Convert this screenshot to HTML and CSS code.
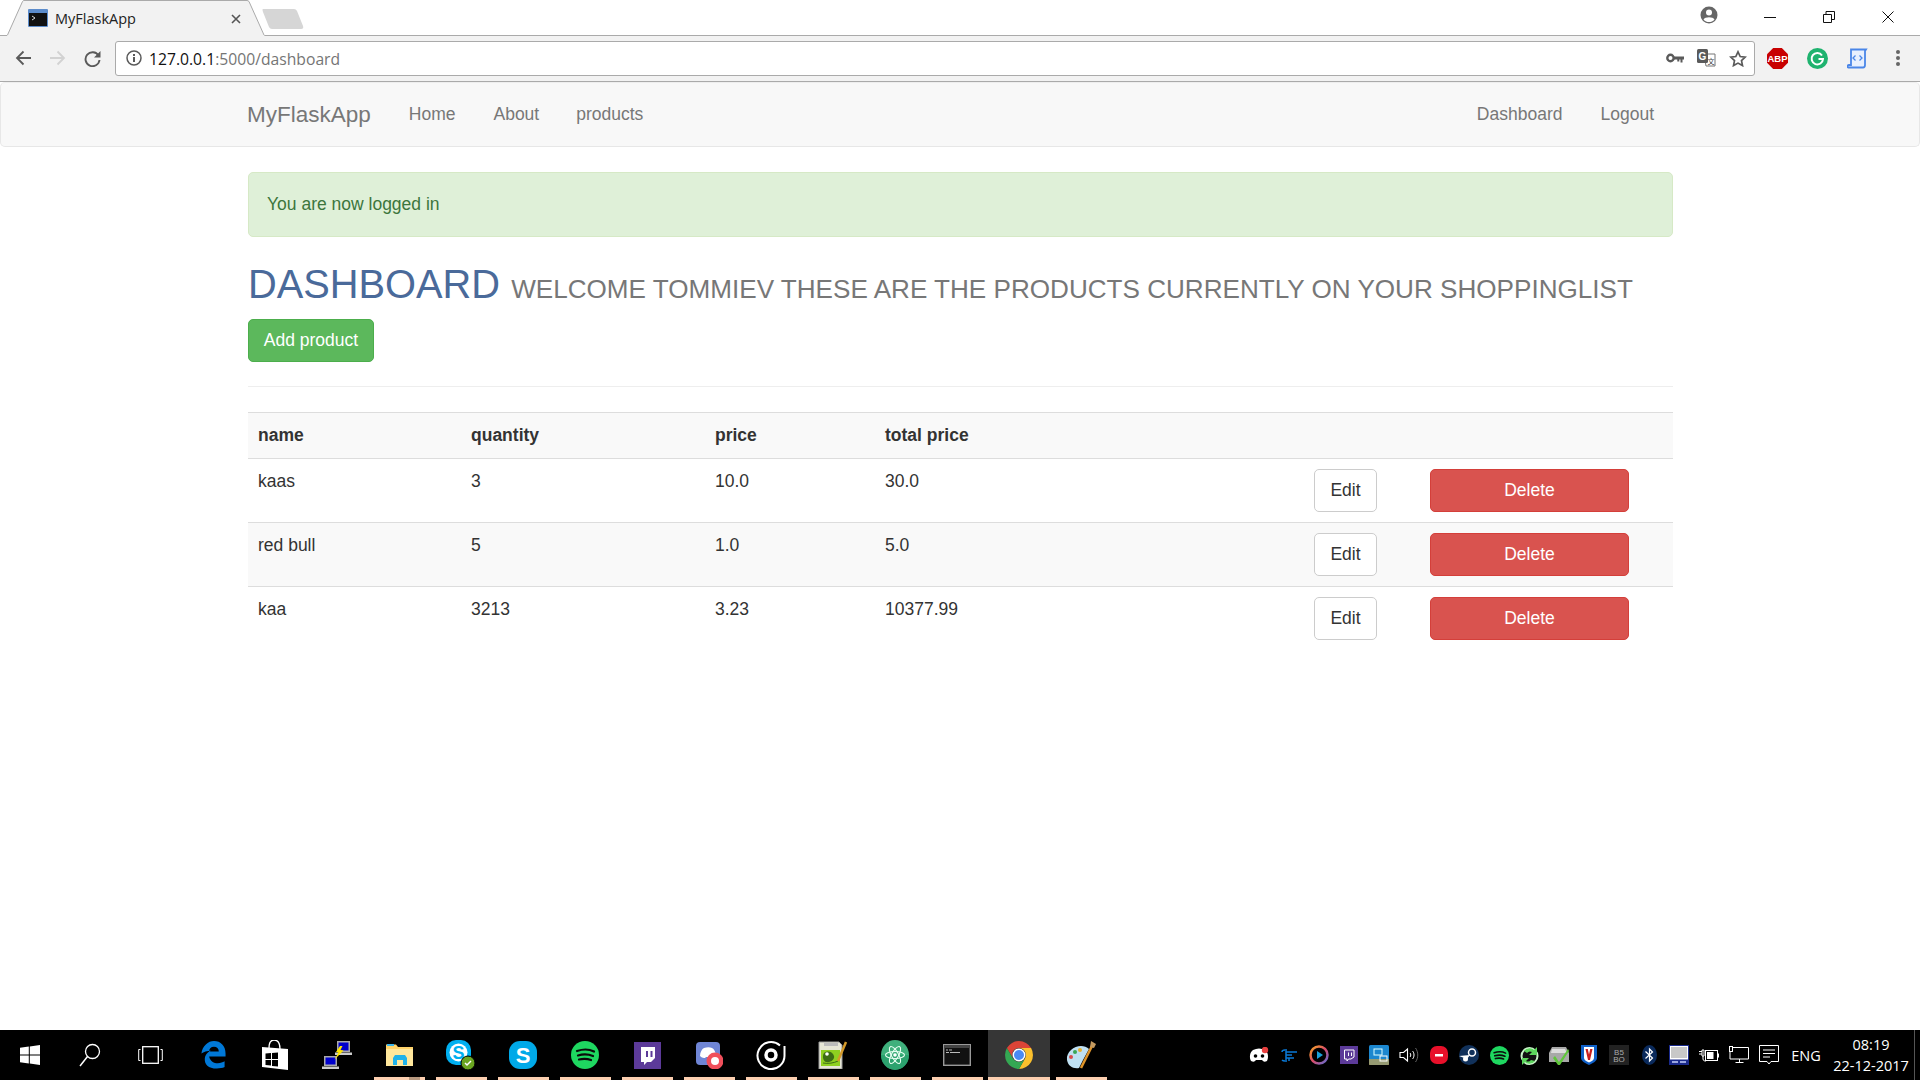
FILE: index.html
```html
<!DOCTYPE html>
<html lang="en">
<head>
<meta charset="utf-8">
<title>MyFlaskApp</title>
<link rel="stylesheet" href="styles.css">
</head>
<body>
<header class="chrome">
  <div class="tabstrip">
    <div class="tab">
      <svg class="tab-shape" width="272" height="36" viewBox="0 0 272 36"><path d="M7 36 L22.5 1 Q23 .5 24 .5 H247 Q248 .5 249 1.5 L264.500 36Z" fill="#f2f2f2"/><path d="M7.500 35 L22.500 1.500 Q23 .5 24 .5 H247 Q248 .5 249 1.500 L264 35" fill="none" stroke="#aaa"/></svg>
      <svg class="tab-fav" width="20" height="18" viewBox="0 0 20 18"><rect width="20" height="18" rx="1" fill="#5c8ccb"/><rect x="1" y="4" width="18" height="13" fill="#111"/><path d="M4 7l3 2-3 2" stroke="#ddd" fill="none"/></svg>
      <span class="tab-title">MyFlaskApp</span>
      <svg class="tab-x" width="10" height="10" viewBox="0 0 10 10"><path d="M1 1l8 8M9 1l-8 8" stroke="#555" stroke-width="1.600"/></svg>
    </div>
    <svg class="newtab" width="42" height="22" viewBox="0 0 42 22"><path d="M1 1H32Q34 1 35 3L41 18Q42 21 39 21H10Q8 21 7 19L1 4Q0 1 1 1Z" fill="#d6d6d6"/></svg>
    <div class="winctl">
      <svg class="profile" width="18" height="18" viewBox="0 0 18 18"><circle cx="9" cy="9" r="8.500" fill="#666"/><circle cx="9" cy="6.500" r="3" fill="#fff"/><path d="M3.500 13.500C5 10.500 13 10.500 14.500 13.500 13 15.500 11 16 9 16 7 16 5 15.500 3.500 13.500Z" fill="#fff"/></svg>
      <span class="winbtn"><svg width="12" height="12" viewBox="0 0 12 12"><path d="M0 6.500H12" stroke="#111"/></svg></span>
      <span class="winbtn"><svg width="12" height="12" viewBox="0 0 12 12"><path d="M.5 3.500h8v8h-8zM3 3.500V.5h8.500v8H8.500" fill="none" stroke="#111"/></svg></span>
      <span class="winbtn"><svg width="12" height="12" viewBox="0 0 12 12"><path d="M.5.5l11 11M11.500.5l-11 11" stroke="#111"/></svg></span>
    </div>
  </div>
  <div class="toolbar">
    <svg class="nav-ic" width="16" height="16" viewBox="0 0 16 16"><path d="M16 8H2M8.500 1.500L2 8l6.500 6.500" fill="none" stroke="#5a5a5a" stroke-width="1.800"/></svg>
    <svg class="nav-ic" width="16" height="16" viewBox="0 0 16 16"><path d="M0 8H14M7.500 1.500L14 8l-6.500 6.500" fill="none" stroke="#d2d2d2" stroke-width="1.800"/></svg>
    <svg class="nav-ic" width="17" height="17" viewBox="0 0 17 17"><path d="M14.500 5.500A7 7 0 1 0 15.500 10" fill="none" stroke="#5a5a5a" stroke-width="1.900"/><path d="M16.500 1v6.500H10z" fill="#5a5a5a"/></svg>
    <div class="omnibox">
      <svg class="info" width="16" height="16" viewBox="0 0 16 16"><circle cx="8" cy="8" r="7" fill="none" stroke="#5a5a5a" stroke-width="1.500"/><path d="M7 7h2v5H7zM7 4h2v2H7z" fill="#5a5a5a"/></svg>
      <span class="url"><span class="host">127.0.0.1</span>:5000/dashboard</span>
      <span class="omni-icons">
        <svg width="18" height="10" viewBox="0 0 18 10"><circle cx="4.500" cy="5" r="3.200" fill="none" stroke="#5a5a5a" stroke-width="2.400"/><path d="M8 3.500h10v3h-1.500v3h-2v-3h-1.200v2h-2v-2H8z" fill="#5a5a5a"/></svg>
        <svg width="19" height="18" viewBox="0 0 19 18"><path d="M7 5h11v12H9z" fill="#fff" stroke="#777"/><rect width="11" height="14" rx="1.500" fill="#5a5a5a"/><text x="1.500" y="11" class="gt">G</text><text x="10.500" y="14.500" class="gt2">文</text></svg>
        <svg width="18" height="17" viewBox="0 0 18 17"><path d="M9 1.800l2.200 4.700 5 .6-3.700 3.500 1 5-4.500-2.500-4.500 2.500 1-5L1.800 7.100l5-.6z" fill="none" stroke="#5a5a5a" stroke-width="1.700"/></svg>
      </span>
    </div>
    <div class="exts">
      <svg width="21" height="21" viewBox="0 0 21 21"><path d="M6.200 0h8.600L21 6.200v8.600L14.800 21H6.200L0 14.800V6.200z" fill="#c80000"/><text x="10.500" y="14" class="abp">ABP</text></svg>
      <svg width="21" height="21" viewBox="0 0 21 21"><circle cx="10.500" cy="10.500" r="10.500" fill="#1fb36f"/><path d="M15 7.500A5.700 5.700 0 1 0 16 11h-4.500" fill="none" stroke="#fff" stroke-width="2"/></svg>
      <svg width="21" height="21" viewBox="0 0 21 21"><path d="M4 1.500h15l-1 1.500v14c0 2-1 2.500-2 2.500H1.500C0 19.500 0 17 2 17h2z" fill="#e8f0fe" stroke="#4a86e8" stroke-width="1.800"/><path d="M8.500 7.500L6 10l2.500 2.500M12.500 7.500L15 10l-2.500 2.500" fill="none" stroke="#4a86e8" stroke-width="1.300"/></svg>
      <svg width="6" height="18" viewBox="0 0 6 18"><circle cx="3" cy="3" r="2" fill="#666"/><circle cx="3" cy="9" r="2" fill="#666"/><circle cx="3" cy="15" r="2" fill="#666"/></svg>
    </div>
  </div>
</header>

<nav class="navbar">
  <a class="brand">MyFlaskApp</a>
  <a class="nav-link">Home</a>
  <a class="nav-link">About</a>
  <a class="nav-link">products</a>
  <span class="nav-gap"></span>
  <a class="nav-link">Dashboard</a>
  <a class="nav-link">Logout</a>
</nav>

<main class="content">
  <div class="alert">You are now logged in</div>
  <h1 class="title">DASHBOARD <small>WELCOME TOMMIEV THESE ARE THE PRODUCTS CURRENTLY ON YOUR SHOPPINGLIST</small></h1>
  <a class="btn btn-add">Add product</a>
  <hr class="rule">
  <table class="grid">
    <colgroup><col class="c1"><col class="c2"><col class="c3"><col class="c4"><col class="c5"><col class="c6"></colgroup>
    <thead><tr><th>name</th><th>quantity</th><th>price</th><th>total price</th><th></th><th></th></tr></thead>
    <tbody>
      <tr><td>kaas</td><td>3</td><td>10.0</td><td>30.0</td><td><a class="btn btn-edit">Edit</a></td><td><a class="btn btn-del">Delete</a></td></tr>
      <tr><td>red bull</td><td>5</td><td>1.0</td><td>5.0</td><td><a class="btn btn-edit">Edit</a></td><td><a class="btn btn-del">Delete</a></td></tr>
      <tr><td>kaa</td><td>3213</td><td>3.23</td><td>10377.99</td><td><a class="btn btn-edit">Edit</a></td><td><a class="btn btn-del">Delete</a></td></tr>
    </tbody>
  </table>
</main>

<footer class="taskbar">
  <div class="apps">
    <span class="slot sys"><svg width="20" height="20" viewBox="0 0 20 20"><path d="M0 2.800L8.800 1.500V9.500H0zM9.800 1.400L20 0V9.500H9.800zM0 10.500H8.800V18.500L0 17.200zM9.800 10.500H20V20L9.800 18.600z" fill="#fff"/></svg></span>
    <span class="slot sys"><svg width="22" height="24" viewBox="0 0 22 24"><circle cx="13.500" cy="8.500" r="7" fill="none" stroke="#fff" stroke-width="1.300"/><path d="M8.500 13.500L1 23" stroke="#fff" stroke-width="1.500"/></svg></span>
    <span class="slot sys"><svg width="25" height="18" viewBox="0 0 25 18"><rect x="4.700" y=".7" width="15.600" height="16.600" fill="none" stroke="#fff" stroke-width="1.300"/><path d="M2.500 3.500H.7v11h1.800M22.500 3.500h1.800v11h-1.800" fill="none" stroke="#fff"/></svg></span>
    <span class="slot slot-edge"><svg width="26" height="28" viewBox="0 0 26 29"><path fill-rule="evenodd" fill="#0078d7" d="M1 13C2 5 8 0 14 0c7 0 12 5 12 13v3H9c1 5 5 7 9 7 3 0 5-1 7-2v6c-2 1-5 1.500-8 1.500C8 28.500 4 24 4.500 18 5 14 8 11 11 10 7 10 3 11 1 13zM9 11h10c0-3-2-5-5-5-3 0-5 2-5 5z"/></svg></span>
    <span class="slot"><svg width="26" height="30" viewBox="0 0 26 30"><path d="M7 8C7 1 10 0 12 0s6 1 6 9" fill="none" stroke="#fff" stroke-width="1.300"/><path d="M0 7L26 9V30L0 27z" fill="#fff"/><path d="M3.500 13.500l5.500-.4V19H3.500zM10 13l6-.4V19h-6zM3.500 20H9v5.500l-5.500-.5zM10 20h6v6.500l-6-.6z" fill="#000"/></svg></span>
    <span class="slot"><svg width="30" height="30" viewBox="0 0 30 30"><path d="M15 1h13v11H15z" fill="#aaa"/><path d="M16.500 2.500h10v8h-10z" fill="#00c"/><path d="M13 12.500h17V15H13z" fill="#ccc"/><path d="M2 16h13v10H2z" fill="#aaa"/><path d="M3.500 17.500h10v7h-10z" fill="#00c"/><path d="M0 26.500h17V29H0z" fill="#ccc"/><path d="M18 6l-4 6 2.500.5-4 7 9-9-3-.5 2-4z" fill="#ffe600"/></svg></span>
    <span class="slot open stack"><svg width="27" height="24" viewBox="0 0 27 24"><path d="M0 1.500h10l2 2.500H27V22H0z" fill="#ffd36b"/><path d="M0 6H27V23H0z" fill="#ffe79c"/><path d="M1 1h7v2H1z" fill="#3cb4e8"/><path d="M7 22V15l2-3h10l2 3v7h-4v-5h-6v5z" fill="#1fb2ea"/></svg></span>
    <span class="slot open"><svg width="32" height="32" viewBox="0 0 32 32"><rect x="1" y="1" width="25" height="25" rx="10" fill="#00aff0"/><circle cx="13.500" cy="13.500" r="9" fill="#fff"/><text x="13.500" y="20" class="sky">S</text><circle cx="23" cy="24" r="7" fill="#6aa520" stroke="#000" stroke-width="1"/><path d="M20 24l2 2 4-4" fill="none" stroke="#fff" stroke-width="1.500"/></svg></span>
    <span class="slot open"><svg width="28" height="28" viewBox="0 0 28 28"><rect x="0" y="0" width="28" height="28" rx="11" fill="#00a9e8"/><text x="14" y="22" class="sky2">S</text></svg></span>
    <span class="slot open"><svg width="28" height="28" viewBox="0 0 28 28"><circle cx="14" cy="14" r="14" fill="#1ed760"/><path d="M6 10c6-2 12-2 17 .5M7 14.500c5-1.500 10-1.500 15 .5M8 18.500c4-1 8-1 12 .5" fill="none" stroke="#0b0b0b" stroke-width="2.200" stroke-linecap="round"/></svg></span>
    <span class="slot open"><svg width="27" height="27" viewBox="0 0 27 27"><rect width="27" height="27" fill="#5c3a99"/><path d="M7 5H21V16L17 20H13L10 23V20H7z" fill="#fff"/><path d="M12 9h2v6h-2zM16.500 9h2v6h-2z" fill="#5c3a99"/></svg></span>
    <span class="slot open"><svg width="28" height="28" viewBox="0 0 28 28"><rect x="1" y="1" width="24" height="23" rx="4" fill="#6f85d5"/><path d="M5 15c0-4 2-7 4-8 3-1 6-1 8 0 2 1 4 4 4 8-2 2-4 2-5 2l-1-1h-4l-1 1c-1 0-3 0-5-2z" fill="#fff"/><circle cx="20" cy="20" r="8.500" fill="#f04f5b"/><circle cx="20" cy="20" r="4" fill="#fff"/></svg></span>
    <span class="slot open"><svg width="30" height="30" viewBox="0 0 30 30"><path d="M24 5.500A13.500 13.500 0 1 0 28.500 15" fill="none" stroke="#fff" stroke-width="2"/><path d="M28.500 15V6" stroke="#fff" stroke-width="2"/><circle cx="15" cy="15" r="5" fill="none" stroke="#fff" stroke-width="3.500"/></svg></span>
    <span class="slot open"><svg width="30" height="28" viewBox="0 0 30 28"><path d="M1 1h20l3 3v24H1z" fill="#e6e6d6" stroke="#999"/><path d="M3 9H22V25H3z" fill="#8fd020"/><path d="M6 12c4-3 9-1 10 3 1 3-3 7-8 6-3-1-4-6-2-9z" fill="#3d6e15"/><circle cx="9" cy="13" r="1.800" fill="#fff"/><path d="M5 22c5 1 11 0 15-2" stroke="#3d6e15" fill="none"/><path d="M6 2h14v3H6z" fill="#bbb"/><path d="M20 20L28 1" stroke="#d49a2a" stroke-width="2.500"/></svg></span>
    <span class="slot open"><svg width="28" height="30" viewBox="0 0 28 30"><ellipse cx="14" cy="15" rx="14" ry="15" fill="#3fb07c"/><path d="M14 30A14 15 0 0 0 28 15H0A14 15 0 0 0 14 30z" fill="#1f9a66" opacity=".6"/><g fill="none" stroke="#e8fff2" stroke-width="1.100"><ellipse cx="14" cy="15" rx="9.500" ry="3.500"/><ellipse cx="14" cy="15" rx="9.500" ry="3.500" transform="rotate(60 14 15)"/><ellipse cx="14" cy="15" rx="9.500" ry="3.500" transform="rotate(-60 14 15)"/></g><circle cx="14" cy="15" r="1.800" fill="#fff"/></svg></span>
    <span class="slot open"><svg width="28" height="22" viewBox="0 0 28 22"><rect x=".7" y=".7" width="26.600" height="20.600" fill="#111" stroke="#999" stroke-width="1.400"/><path d="M1 1h26v3H1z" fill="#444"/><path d="M3 6h2M6 6h3M3 8.500h3M7 8.500h10" stroke="#bbb"/></svg></span>
    <span class="slot open active"><svg width="28" height="28" viewBox="-14 -14 28 28"><path d="M-12.100-7A14 14 0 0 1 12.100-7L0-7A7 7 0 0 0-6 3.500Z" fill="#db4437"/><path d="M12.100-7A14 14 0 0 1 0 14L6 3.500A7 7 0 0 0 0-7Z" fill="#fbc02d"/><path d="M0 14A14 14 0 0 1-12.100-7L-6 3.500A7 7 0 0 0 6 3.500Z" fill="#34a853"/><circle r="6.500" fill="#fff"/><circle r="5" fill="#4a8af4"/></svg></span>
    <span class="slot open"><svg width="30" height="30" viewBox="0 0 30 30"><path d="M1 20C0 12 8 6 15 6c3 0 6 1 8 3L17 20 13 28C7 29 2 26 1 20z" fill="#bfe0f2"/><circle cx="9" cy="12" r="2" fill="#3aa655"/><circle cx="14" cy="10" r="2" fill="#e8b030"/><circle cx="5" cy="17" r="2" fill="#d94b4b"/><path d="M15 28L26 6" stroke="#e0952a" stroke-width="2.500"/><path d="M24 7l1-6 5 3-2 4z" fill="#c49a60"/></svg></span>
  </div>
  <div class="tray">
    <span class="tslot"><svg width="20" height="16" viewBox="0 0 20 16"><path d="M2 14C0 10 1 5 4 3c4-2 8-2 12 0 3 2 4 7 2 11-2 1-3 1-4 0l-1-1H7l-1 1c-1 1-2 1-4 0z" fill="#fff"/><circle cx="6.500" cy="9" r="1.800" fill="#000"/><circle cx="13.500" cy="9" r="1.800" fill="#000"/><circle cx="16" cy="3" r="3.200" fill="#e8403f"/></svg></span>
    <span class="tslot"><svg width="16" height="13" viewBox="0 0 16 13"><path d="M1 3c0-1 1-2 3-2M1 11c1 1 2 1 3 1M5 0v13M5 3h11M5 6h6M5 9h8M8 9v3" fill="none" stroke="#0a7ad8" stroke-width="1.500"/></svg></span>
    <span class="tslot"><svg width="20" height="20" viewBox="0 0 20 20"><circle cx="10" cy="10" r="8.500" fill="none" stroke="url(#ring)" stroke-width="2.500"/><defs><linearGradient id="ring" x2="1" y2="1"><stop offset="0" stop-color="#f5a623"/><stop offset=".5" stop-color="#d94b6a"/><stop offset="1" stop-color="#5a6fd8"/></linearGradient></defs><path d="M8 6l6 4-6 4z" fill="#1aa0d8"/></svg></span>
    <span class="tslot"><svg width="18" height="18" viewBox="0 0 18 18"><rect width="18" height="18" fill="#5c3a99"/><path d="M4.500 4H14V11L11 13H8.500L7 15V13H4.500z" fill="none" stroke="#fff"/><path d="M8 6.500h1V10H8zM11 6.500h1V10h-1z" fill="#fff"/></svg></span>
    <span class="tslot"><svg width="20" height="20" viewBox="0 0 20 20"><rect width="20" height="20" rx="1.500" fill="#1c87cf"/><rect x="0" y="14" width="20" height="6" fill="#c9a24a" opacity=".7"/><rect x="5" y="4" width="8" height="6" fill="none" stroke="#dff" /><rect x="11" y="11" width="7" height="5" fill="none" stroke="#fff"/></svg></span>
    <span class="tslot"><svg width="20" height="16" viewBox="0 0 20 16"><path d="M1 5.500h3.500L8.500 2V14L4.500 10.500H1z" fill="none" stroke="#fff" stroke-width="1.100"/><path d="M11 6c1 1 1 3 0 4M13.500 4c2 2 2 6 0 8" fill="none" stroke="#fff"/><path d="M16.500 1c3 4 3 10 0 14" fill="none" stroke="#666"/></svg></span>
    <span class="tslot"><svg width="18" height="18" viewBox="0 0 18 18"><rect width="18" height="18" rx="7" fill="#e8102a"/><path d="M5 8h8v2.500H5z" fill="#fff"/></svg></span>
    <span class="tslot"><svg width="20" height="20" viewBox="0 0 20 20"><circle cx="10" cy="10" r="10" fill="#11315a"/><circle cx="13" cy="7.500" r="3.500" fill="none" stroke="#fff" stroke-width="1.500"/><path d="M0 11l8 3 3-4" fill="#fff"/><circle cx="6.500" cy="14" r="2.500" fill="#fff"/></svg></span>
    <span class="tslot"><svg width="19" height="19" viewBox="0 0 28 28"><circle cx="14" cy="14" r="14" fill="#1ed760"/><path d="M6 10c6-2 12-2 17 .5M7 14.500c5-1.500 10-1.500 15 .5M8 18.500c4-1 8-1 12 .5" fill="none" stroke="#0b0b0b" stroke-width="2.400" stroke-linecap="round"/></svg></span>
    <span class="tslot"><svg width="19" height="21" viewBox="0 0 19 21"><circle cx="9.500" cy="11" r="8" fill="#111" stroke="#c8f2c8" stroke-width="2"/><path d="M4 6a7 7 0 0 1 10-1l3-3v8h-8l3-3a4 4 0 0 0-5 1z" fill="#5cd65c"/><path d="M15 16a7 7 0 0 1-10 1l-3 3v-7h7l-3 3a4 4 0 0 0 5-1z" fill="#5cd65c"/></svg></span>
    <span class="tslot"><svg width="20" height="19" viewBox="0 0 20 19"><path d="M3 1h14l3 6v9H0V7z" fill="#a8a8a8"/><path d="M3 3h13l2 4H2z" fill="#dcdcdc"/><path d="M6 10l4 6 9-13 1 2-9 14H9L4 12z" fill="#5fc63a"/></svg></span>
    <span class="tslot"><svg width="16" height="20" viewBox="0 0 16 20"><path d="M0 0h16v13c0 3-4 5-8 7-4-2-8-4-8-7z" fill="#1060c8"/><path d="M3 2h10v11c0 2-2 3-5 4.500-3-1.500-5-2.500-5-4.500z" fill="#fff"/><path d="M4.500 4h2.300L8 9.500 9.200 4h2.300L9 15H7z" fill="#c81e1e"/></svg></span>
    <span class="tslot"><svg width="20" height="20" viewBox="0 0 20 20"><rect width="20" height="20" fill="#222"/><text x="10" y="10" class="bo">B5</text><text x="10" y="17" class="bo">BO</text></svg></span>
    <span class="tslot"><svg width="15" height="20" viewBox="0 0 15 20"><ellipse cx="7.500" cy="10" rx="7.500" ry="10" fill="#0a2a5c"/><path d="M3.500 6.500l7 6.500L7.500 16V4l3 3-7 6.500" fill="none" stroke="#fff" stroke-width="1.200"/></svg></span>
    <span class="tslot"><svg width="20" height="20" viewBox="0 0 20 20"><rect width="20" height="20" fill="#fff"/><rect x=".5" y=".5" width="19" height="19" fill="none" stroke="#1a2a8c"/><rect x="2" y="2" width="16" height="11" fill="#c8c8c8"/><path d="M1 14.500h18v5H1z" fill="#1a2a8c"/><path d="M3 16h6v2H3zM11 16h6v2h-6z" fill="#9aa6e0"/></svg></span>
    <span class="tslot"><svg width="20" height="13" viewBox="0 0 20 13"><path d="M0 2.500h3M0 5h3M3 1h2v6H3zM4 7v3c0 2 2 2 3 2" fill="none" stroke="#fff"/><rect x="6.500" y="1.500" width="12" height="10" fill="#000" stroke="#fff"/><rect x="8" y="3" width="6.500" height="7" fill="#fff"/><path d="M19 4.500h1v4h-1z" fill="#fff"/></svg></span>
    <span class="tslot"><svg width="20" height="18" viewBox="0 0 20 18"><path d="M3 1.500h16.500V13H1V5" fill="none" stroke="#fff"/><rect x=".5" y=".5" width="3" height="5" fill="#000" stroke="#fff"/><path d="M10.500 13v3M6.500 16.500h8" stroke="#fff"/></svg></span>
    <span class="tslot"><svg width="20" height="20" viewBox="0 0 20 20"><path d="M.5.5h19v16H12l-2 2.500L8 16.500H.5z" fill="none" stroke="#fff"/><path d="M4 5h12M4 8.500h12M4 12h7" stroke="#fff"/></svg></span>
    <span class="lang">ENG</span>
    <span class="clock"><span>08:19</span><span>22-12-2017</span></span>
    <span class="showdesk"></span>
  </div>
</footer>
</body>
</html>
```

FILE: styles.css
```css
* { box-sizing: border-box; }
html, body { margin: 0; height: 100%; }
body {
  display: flex;
  flex-direction: column;
  height: 1080px;
  overflow: hidden;
  background: #fff;
  font-family: "Liberation Sans", Arial, sans-serif;
  font-size: 17.5px;
  line-height: 25px;
  color: #333;
}
svg { display: block; flex: none; }

/* browser chrome */
.chrome { flex: none; }
.tabstrip {
  display: flex;
  height: 36px;
  background: linear-gradient(#fff 35px, #aaa 35px);
}
.tab {
  position: relative;
  width: 262px;
  height: 36px;
  display: flex;
  align-items: center;
  flex: none;
}
.tab-shape { position: absolute; left: 0; top: 0; }
.tab-fav { position: relative; margin: 0 0 0 28px; }
.tab-title {
  position: relative;
  margin-left: 7px;
  width: 176px;
  font-family: "Open Sans", "Noto Sans", sans-serif;
  font-size: 14.500px;
  color: #222;
  line-height: 36px;
  padding-top: 2px;
}
.tab-x { position: relative; margin-top: 2px; }
.newtab { margin-top: 8px; }
.winctl {
  margin-left: auto;
  display: flex;
  align-items: flex-start;
  padding-right: 3px;
}
.profile { margin-top: 6px; margin-right: 22px; }
.winbtn {
  width: 59px;
  height: 35px;
  display: flex;
  align-items: center;
  justify-content: center;
  padding-bottom: 2px;
}
.toolbar {
  height: 46px;
  display: flex;
  align-items: center;
  background: #f2f2f2;
  border-bottom: 1px solid #aaa;
  padding-left: 15px;
  padding-bottom: 1px;
}
.nav-ic { margin-right: 19px; }
.nav-ic:nth-child(3) { margin-right: 0; margin-left: -1px; }
.omnibox {
  width: 1640px;
  height: 35px;
  margin-left: 14px;
  display: flex;
  align-items: center;
  background: #fff;
  border: 1px solid #aaa;
  border-radius: 3px;
  padding: 0 7px 0 10px;
}
.url {
  margin-left: 7px;
  padding-top: 2px;
  font-family: "Open Sans", "Noto Sans", sans-serif;
  font-size: 15.700px;
  color: #757575;
}
.host { color: #111; }
.omni-icons { margin-left: auto; display: flex; align-items: center; gap: 13px; }
.gt { font-family: "Liberation Sans", sans-serif; font-size: 10px; font-weight: 700; fill: #fff; }
.gt2 { font-family: "Noto Sans CJK SC", sans-serif; font-size: 7px; fill: #444; }
.exts {
  display: flex;
  align-items: center;
  margin-left: 12px;
  gap: 19px;
}
.exts svg:last-child { margin-left: 8px; }
.abp { font-family: "Liberation Sans", sans-serif; font-weight: 700; font-size: 9.500px; fill: #fff; text-anchor: middle; }

/* page navbar */
.navbar {
  flex: none;
  height: 65px;
  display: flex;
  align-items: center;
  padding: 0 246px 0 248px;
  background: #f8f8f8;
  border: 1px solid #e7e7e7;
  border-top-color: #eee;
  border-radius: 5px;
  color: #777;
}
.brand { font-size: 22.500px; margin-right: 19px; margin-left: -2px; }
.nav-link { padding: 0 19px; }
.nav-link:nth-child(4) { margin-left: -1px; }
.nav-gap { flex: 1; }

/* content */
.content {
  flex: 1;
  padding: 25px 247px 0 248px;
}
.alert {
  height: 65px;
  padding: 19px 18px;
  background: #dff0d8;
  border: 1px solid #d6e9c6;
  border-radius: 5px;
  color: #3c763d;
}
.title {
  margin: 25px 0 8px;
  font-size: 39.800px;
  font-weight: 400;
  line-height: 44px;
  color: #4a6a9a;
  white-space: nowrap;
}
.title small { font-size: 26.100px; color: #777; font-weight: 400; }
.btn {
  display: inline-flex;
  align-items: center;
  justify-content: center;
  height: 43px;
  border: 1px solid transparent;
  border-radius: 5px;
  vertical-align: top;
}
.btn-add { width: 126px; background: #5cb85c; border-color: #4cae4c; color: #fff; }
.btn-edit { width: 63px; background: #fff; border-color: #ccc; color: #333; }
.btn-del { width: 199px; background: #d9534f; border-color: #d43f3a; color: #fff; }
.rule { margin: 24px 0 25px; height: 1px; border: 0; background: #eee; }
.grid {
  width: 100%;
  table-layout: fixed;
  border-collapse: collapse;
}
.c1 { width: 213px; }
.c2 { width: 244px; }
.c3 { width: 170px; }
.c4 { width: 429px; }
.c5 { width: 116px; }
.grid th, .grid td {
  padding: 10px;
  text-align: left;
  vertical-align: top;
  border-top: 1px solid #ddd;
}
.grid th { font-weight: 700; background: #f9f9f9; border-bottom: 1px solid #ddd; }
.grid tbody tr:first-child td { border-top: 0; }
.grid tbody tr:nth-child(2) td { background: #f9f9f9; }

/* taskbar */
.taskbar {
  flex: none;
  height: 50px;
  display: flex;
  justify-content: space-between;
  background: #000;
}
.apps, .tray { display: flex; height: 50px; }
.slot {
  width: 62px;
  height: 50px;
  display: flex;
  align-items: center;
  justify-content: center;
}
.sys { width: 60px; }
.slot-edge { margin-left: 2px; }
.open {
  background: linear-gradient(#fccfb0, #fccfb0) center bottom / 51px 3px no-repeat;
}
.stack {
  background:
    linear-gradient(#b8997f, #b8997f) 41px bottom / 11px 3px no-repeat,
    linear-gradient(#fccfb0, #fccfb0) center bottom / 51px 3px no-repeat;
}
.active {
  background:
    linear-gradient(#fccfb0, #fccfb0) left bottom / 100% 3px no-repeat,
    #363636;
}
.tray { font-family: "Open Sans", "Noto Sans", sans-serif; color: #fff; }
.tslot {
  width: 30px;
  display: flex;
  align-items: center;
  justify-content: center;
}
.lang { width: 44px; display: flex; align-items: center; justify-content: center; font-size: 14.500px; }
.clock {
  width: 86px;
  display: flex;
  flex-direction: column;
  align-items: center;
  justify-content: center;
  font-size: 14.500px;
  line-height: 21px;
}
.showdesk { width: 6px; border-left: 1px solid #555; }
.sky { font-family: "Liberation Sans", sans-serif; font-weight: 700; font-size: 18px; fill: #00aff0; text-anchor: middle; }
.sky2 { font-family: "Liberation Sans", sans-serif; font-weight: 700; font-size: 22px; fill: #fff; text-anchor: middle; }
.bo { font-family: "Liberation Sans", sans-serif; font-size: 8px; fill: #aaa; text-anchor: middle; }
```
